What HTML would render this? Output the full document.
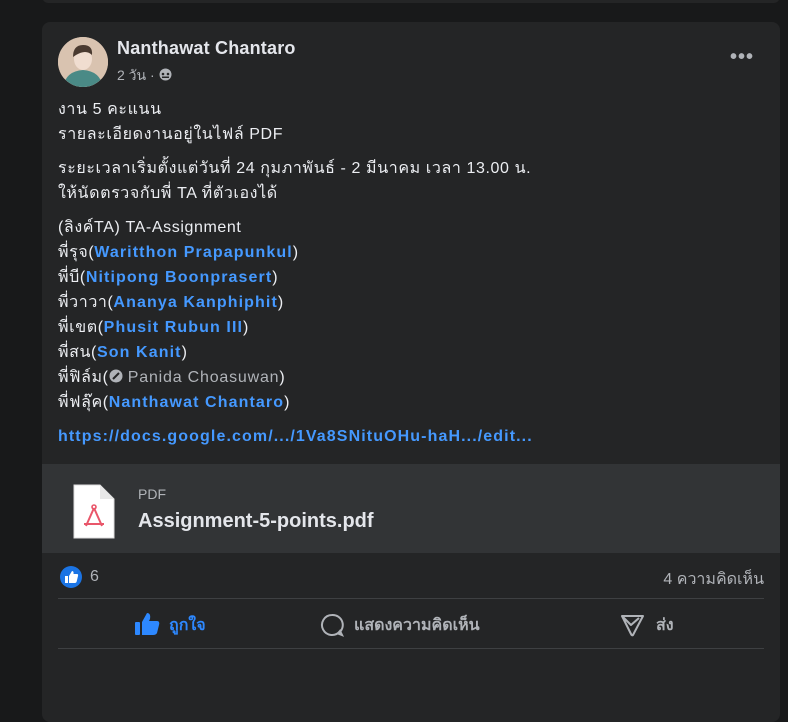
<!DOCTYPE html>
<html><head><meta charset="utf-8"><style>
*{margin:0;padding:0;box-sizing:border-box}
body{width:788px;height:669px;background:#18191a;overflow:hidden;font-family:"Liberation Sans","Noto Sans CJK SC",sans-serif;color:#e4e6eb;position:relative}
.prev{position:absolute;left:42px;top:-10px;width:738px;height:13px;background:#242526;border-radius:8px}
.card{position:absolute;left:42px;top:22px;width:738px;height:700px;background:#242526;border-radius:8px}
.av{position:absolute;left:16px;top:15px;width:50px;height:50px;border-radius:50%;background:#d8c2ae;overflow:hidden}
.name{position:absolute;left:75px;top:16px;font-size:18px;font-weight:bold;color:#e4e6eb;letter-spacing:0.2px}
.time{position:absolute;left:75px;top:43px;font-size:14px;color:#b0b3b8}
.dots{position:absolute;left:688px;top:24px;font-size:20px;color:#b0b3b8;letter-spacing:1px;font-weight:bold}
.txt{position:absolute;left:16px;top:75px;font-size:16px;line-height:25px;letter-spacing:0.6px;color:#eceef2}
.txt p{margin-bottom:9px}
.b{color:#4599ff;font-weight:bold;letter-spacing:1.1px}
.g{color:#b0b3b8;letter-spacing:0.8px}
.att{position:absolute;left:0;top:442px;width:738px;height:89px;background:#323436}
.att .t1{position:absolute;left:96px;top:22px;font-size:14px;color:#b0b3b8}
.att .t2{position:absolute;left:96px;top:46px;font-size:20px;font-weight:bold;color:#e4e6eb}
.like{position:absolute;left:18px;top:544px}
.cnt{position:absolute;left:48px;top:546px;font-size:16px;color:#b0b3b8}
.cm{position:absolute;right:16px;top:545px;font-size:16px;color:#b0b3b8}
.hr{position:absolute;left:16px;width:706px;height:1px;background:#3e4042}
.act{position:absolute;top:591px;font-size:16px;font-weight:bold;color:#b0b3b8}
</style></head><body>
<div class="prev"></div>
<div class="card">
 <div class="av"><svg width="50" height="50"><rect width="50" height="50" fill="#d9c3b0"/><path d="M5 50 Q8 34 25 33 Q42 34 45 50Z" fill="#4a8a86"/><ellipse cx="25" cy="22" rx="9" ry="11" fill="#f0ddd0"/><path d="M15 20 Q15 8 25 8 Q35 8 34 18 Q28 12 18 18Z" fill="#4a3a30"/></svg></div>
 <div class="name">Nanthawat Chantaro</div>
 <div class="time">2 วัน · <svg width="13" height="13" viewBox="0 0 13 13" style="vertical-align:-1px"><circle cx="6.5" cy="6.5" r="6" fill="#b0b3b8"/><circle cx="4" cy="6" r="1.3" fill="#242526"/><circle cx="9" cy="6" r="1.3" fill="#242526"/><rect x="3" y="8.5" width="7" height="1.5" fill="#242526"/></svg></div>
 <div class="dots">•••</div>
 <div class="txt">
  <p>งาน 5 คะแนน<br>รายละเอียดงานอยู่ในไฟล์ PDF</p>
  <p>ระยะเวลาเริ่มตั้งแต่วันที่ 24 กุมภาพันธ์ - 2 มีนาคม เวลา 13.00 น.<br>ให้นัดตรวจกับพี่ TA ที่ตัวเองได้</p>
  <p>(ลิงค์TA) TA-Assignment<br>พี่รุจ(<span class="b">Waritthon Prapapunkul</span>)<br>พี่บี(<span class="b">Nitipong Boonprasert</span>)<br>พี่วาวา(<span class="b">Ananya Kanphiphit</span>)<br>พี่เขต(<span class="b">Phusit Rubun III</span>)<br>พี่สน(<span class="b">Son Kanit</span>)<br>พี่ฟิล์ม(<span class="g"><svg width="14" height="14" viewBox="0 0 14 14" style="vertical-align:-1px"><circle cx="7" cy="7" r="6.5" fill="#b0b3b8"/><path d="M4 10 L10 4" stroke="#242526" stroke-width="2"/></svg> Panida Choasuwan</span>)<br>พี่ฟลุ๊ค(<span class="b">Nanthawat Chantaro</span>)</p>
  <p class="b">https://docs.google.com/.../1Va8SNituOHu-haH.../edit...</p>
 </div>
 <div class="att">
  <svg style="position:absolute;left:30px;top:20px" width="44" height="55" viewBox="0 0 44 55"><path d="M2 1 H28 L42 15 V54 H2Z" fill="#fff" stroke="#ddd"/><path d="M28 1 V15 H42" fill="#e8e8e8"/><path d="M22 24 L14 42 M22 24 L30 42 M12 40 H32" stroke="#e9566a" stroke-width="2" fill="none"/><circle cx="22" cy="23" r="2" fill="none" stroke="#e9566a" stroke-width="1.6"/></svg>
  <div class="t1">PDF</div>
  <div class="t2">Assignment-5-points.pdf</div>
 </div>
 <svg class="like" width="22" height="22" viewBox="0 0 22 22"><circle cx="11" cy="11" r="11" fill="#1b74e4"/><path d="M5 10 h3 v7 h-3z M9 10 l3-5 q2 0 1.5 3 h3.5 q1.5 0 1 2 l-1.2 5 q-.3 2-2 2 h-5.8z" fill="#fff"/></svg>
 <div class="cnt">6</div>
 <div class="cm">4 ความคิดเห็น</div>
 <div class="hr" style="top:576px"></div>
 <svg style="position:absolute;left:92px;top:590px" width="26" height="24" viewBox="0 0 26 24"><rect x="1" y="10" width="5" height="13" rx="1" fill="#2d88ff"/><path d="M8 10 L13 1 Q17 1 16 7 L15 9 H23 Q26 9 25 13 L23 21 Q22 23 19 23 H8Z" fill="#2d88ff"/></svg>
 <div class="act" style="left:127px;color:#2d88ff">ถูกใจ</div>
 <svg style="position:absolute;left:278px;top:591px" width="24" height="24" viewBox="0 0 24 24"><path d="M12 2 A10 10 0 1 0 20 18 L22 22 L18 20.5 A10 10 0 0 0 12 2Z" fill="none" stroke="#b0b3b8" stroke-width="2"/></svg>
 <div class="act" style="left:312px">แสดงความคิดเห็น</div>
 <svg style="position:absolute;left:578px;top:591px" width="25" height="24" viewBox="0 0 25 24"><path d="M2 3 H23 L13 22 Q12 23 11 21Z M2 3 L11 12 L19 5" fill="none" stroke="#b0b3b8" stroke-width="2" stroke-linejoin="round"/></svg>
 <div class="act" style="left:614px">ส่ง</div>
 <div class="hr" style="top:626px"></div>
</div>
</body></html>
